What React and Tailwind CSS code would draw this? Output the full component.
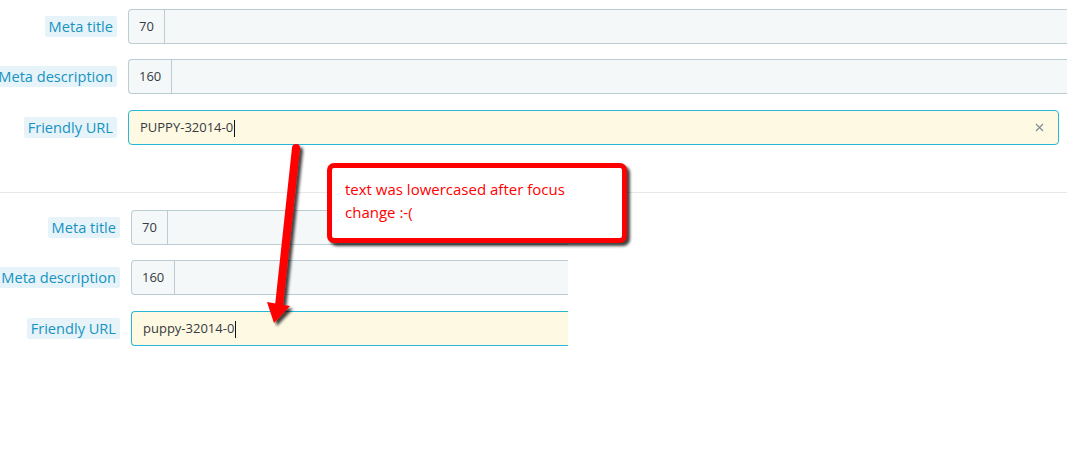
import React from "react";

function Label({ children }) {
  return (
    <div className="w-[117px] shrink-0 flex justify-end items-center">
      <span className="whitespace-nowrap bg-[#e6f4fa] text-[#1793bf] text-[14.6px] leading-[21px] px-[4px] rounded-[2px]">
        {children}
      </span>
    </div>
  );
}

function CountInput({ count, right }) {
  return (
    <div
      className={`flex-1 h-[35px] flex items-stretch bg-[#f5f8f9] border-y border-l border-[#bbcdd2] rounded-l-[4px] ${right}`}
    >
      <div className="px-[10px] flex items-center border-r border-[#bbcdd2] text-[13px] text-[#363a41]">
        {count}
      </div>
      <div className="flex-1" />
    </div>
  );
}

function Row({ label, children, className = "" }) {
  return (
    <div className={`flex items-center gap-[11px] ${className}`}>
      <Label>{label}</Label>
      {children}
    </div>
  );
}

function Cursor() {
  return <span className="inline-block w-[1px] h-[17px] bg-[#111] align-middle ml-[1px]" />;
}

export default function App() {
  return (
    <div
      className="relative w-[1074px] h-[467px] bg-white overflow-hidden"
      style={{ fontFamily: '"Open Sans", "Noto Sans", sans-serif' }}
    >
      {/* Group 1 */}
      <div className="pt-[9px] pr-[7px]">
        <Row label="Meta title">
          <CountInput count="70" />
        </Row>
        <Row label="Meta description" className="mt-[15px]">
          <CountInput count="160" />
        </Row>
        <Row label="Friendly URL" className="mt-[16px] pr-[8px]">
          <div className="flex-1 h-[35px] flex items-center bg-[#fef9e2] border border-[#25b9d7] rounded-[4px] pl-[11px] pr-[14px]">
            <span className="text-[13px] text-[#363a41] flex-1">
              PUPPY-32014-0
              <Cursor />
            </span>
            <svg width="9" height="9" viewBox="0 0 9 9" className="shrink-0">
              <path d="M1 1 L8 8 M8 1 L1 8" stroke="#7a8a8f" strokeWidth="1.1" />
            </svg>
          </div>
        </Row>
      </div>

      <div className="mt-[47px] h-[1px] bg-[#e8e8e8] w-[1067px]" />

      {/* Group 2 */}
      <div className="pt-[17px] pl-[3px] w-[568px]">
        <Row label="Meta title">
          <CountInput count="70" />
        </Row>
        <Row label="Meta description" className="mt-[15px]">
          <CountInput count="160" />
        </Row>
        <Row label="Friendly URL" className="mt-[16px]">
          <div className="flex-1 h-[35px] flex items-center bg-[#fef9e2] border-y border-l border-[#25b9d7] rounded-l-[4px] pl-[11px]">
            <span className="text-[13px] text-[#363a41]">
              puppy-32014-0
              <Cursor />
            </span>
          </div>
        </Row>
      </div>

      {/* Annotation arrow */}
      <svg
        className="absolute left-0 top-0 pointer-events-none"
        width="1074"
        height="467"
        viewBox="0 0 1074 467"
      >
        <defs>
          <filter id="sh" x="-50%" y="-50%" width="200%" height="200%">
            <feGaussianBlur in="SourceAlpha" stdDeviation="1.5" />
            <feOffset dx="3" dy="3" result="b" />
            <feComponentTransfer>
              <feFuncA type="linear" slope="0.75" />
            </feComponentTransfer>
            <feMerge>
              <feMergeNode />
              <feMergeNode in="SourceGraphic" />
            </feMerge>
          </filter>
        </defs>
        <g filter="url(#sh)">
          <line x1="296" y1="148" x2="279" y2="306" stroke="#ff0000" strokeWidth="8" strokeLinecap="round" />
          <polygon points="267,302 290,306 274,323" fill="#ff0000" />
        </g>
      </svg>

      {/* Callout */}
      <div className="absolute left-[327px] top-[163px] w-[300px] h-[80px] rounded-[7px] border-[5px] border-[#ff0000] bg-white shadow-[3px_3px_3px_rgba(0,0,0,0.75)] pl-[13px] pt-[10px]">
        <p className="text-[15px] leading-[23px] text-[#ff0000] whitespace-nowrap">
          text was lowercased after focus
          <br />
          change :-(
        </p>
      </div>
    </div>
  );
}
